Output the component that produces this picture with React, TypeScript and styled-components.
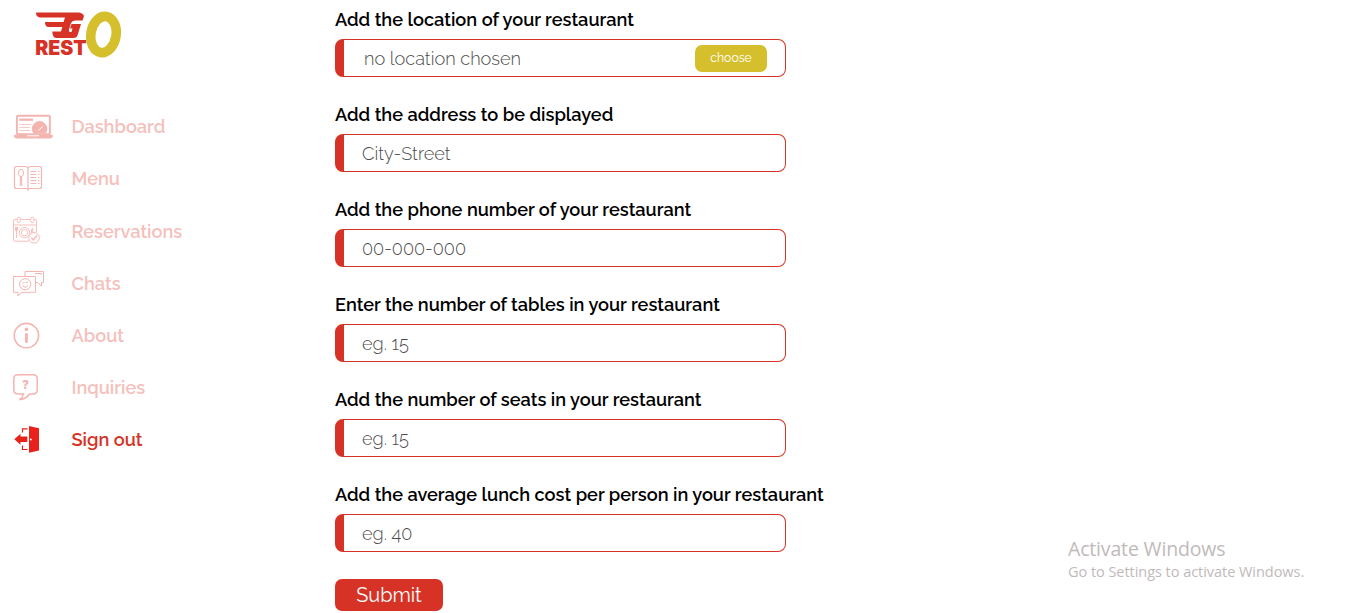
import React from "react";
import styled, { createGlobalStyle } from "styled-components";

const red = "#d63226";
const faded = "#f5bfbc";
const olive = "#d5bf2c";

const GlobalStyle = createGlobalStyle`
  *, *::before, *::after { box-sizing: border-box; }
  html, body { margin: 0; background: #fff; }
  body {
    height: 613px;
    overflow: hidden;
    font-family: Raleway, Lato, sans-serif;
  }
  button { font-family: inherit; border: 0; cursor: pointer; }
`;

const Page = styled.div`
  display: flex;
  height: 613px;
  overflow: hidden;
`;

const Sidebar = styled.aside`
  width: 335px;
  flex: none;
  display: flex;
  flex-direction: column;
`;

const Brand = styled.div`
  height: 100px;
  padding: 8px 0 0 34px;
`;

const Nav = styled.nav`
  display: flex;
  flex-direction: column;
`;

const NavItem = styled.a<{ $active?: boolean }>`
  height: 52.2px;
  padding-left: 13px;
  display: flex;
  align-items: center;
  color: ${(p) => (p.$active ? red : faded)};
  font-size: 18.2px;
  font-weight: 600;
  text-decoration: none;
`;

const NavText = styled.span`
  padding-top: 1.3px;
`;

const IconSlot = styled.span`
  width: 58.5px;
  height: 28px;
  flex: none;
  svg { display: block; }
`;

const Form = styled.form`
  width: 560px;
  display: flex;
  flex-direction: column;
  align-items: flex-start;
`;

const Field = styled.div`
  height: 95px;
  display: flex;
  flex-direction: column;
`;

const Label = styled.label`
  height: 39px;
  line-height: 39px;
  font-size: 18.22px;
  font-weight: 600;
  white-space: nowrap;
  color: #000;
`;

const Box = styled.div<{ $wide?: boolean }>`
  width: 451px;
  height: 38px;
  padding: 0 18px 0 ${(p) => (p.$wide ? 20 : 18)}px;
  display: flex;
  align-items: center;
  justify-content: space-between;
  border: 1px solid ${red};
  border-left-width: 9px;
  border-radius: 8px;
`;

const Placeholder = styled.span`
  padding-top: 2px;
  font-size: 18.15px;
  font-weight: 300;
  line-height: 34px;
  color: #4c4c4c;
`;

const ChooseButton = styled.button`
  width: 72px;
  height: 27px;
  padding: 0;
  border-radius: 7px;
  background: ${olive};
  color: #fff;
  font-size: 12.2px;
`;

const SubmitButton = styled.button`
  width: 108px;
  height: 32px;
  margin-top: 9px;
  padding: 0;
  border-radius: 7px;
  background: ${red};
  color: #fff;
  font-size: 19.9px;
`;

const Watermark = styled.div`
  position: absolute;
  left: 1068px;
  top: 537px;
  font-family: "Segoe UI", "Open Sans", sans-serif;
  color: #bfbaba;
`;

const WatermarkTitle = styled.div`
  font-size: 19.5px;
  line-height: 24px;
  letter-spacing: -0.17px;
`;

const WatermarkText = styled.div`
  font-size: 14.5px;
  line-height: 22px;
  letter-spacing: -0.04px;
`;

const Logo = () => (
  <svg width="90" height="52" viewBox="34 8 90 52">
    <g fill={red}>
      <path d="M36 12.500H79Q83 13 84 16L82.500 20.500H75Q72 20.500 71 23L69 29.500Q68.500 32 70.500 32H71.500L72.500 28.500H70L71.500 24H81L77.500 35.500Q76.500 38 73 38H56Q52.500 37.500 52.300 31.500H61L62.300 27H48Q45 26.500 45 22H63.500L65 17.500H40Q36 17 36 12.500Z" />
      <text x="35.200" y="54.800" fontFamily="Inter, sans-serif" fontWeight="900" fontSize="20.500" textLength="51.500" lengthAdjust="spacingAndGlyphs">REST</text>
    </g>
    <g transform="rotate(9 103.500 34.500)" fill="none" stroke={olive}>
      <ellipse cx="103.500" cy="34.500" rx="12.600" ry="18.200" strokeWidth="9.600" />
    </g>
  </svg>
);

const Icon = ({ children, color = "#f4b4b0" }: { children: React.ReactNode; color?: string }) => (
  <svg width="42" height="28" viewBox="0 0 42 28" fill="none" stroke={color} strokeWidth="1" color={color}>
    {children}
  </svg>
);

const DashboardIcon = () => (
  <Icon>
    <rect x="3.900" y="3.800" width="33" height="18.500" rx="1" strokeWidth="1.900" />
    <path d="M1 22.800H39.700V24.500Q39.500 26.500 37 26.500H4Q1.200 26.500 1 24.500Z" fill="currentColor" stroke="none" />
    <path d="M14 23.800H26" stroke="#fff" />
    <path d="M6.300 7.700H20" strokeWidth="2.300" />
    <path d="M6.300 12.500H18.500M6.300 15.500H17M6.300 18.500H17" opacity=".7" />
    <path d="M20.500 21.500A7.700 7.700 0 1 1 32.700 21.500Z" fill="currentColor" stroke="none" />
    <path d="M25.500 18.500L29.500 14.500" stroke="#fff" />
  </Icon>
);

const MenuIcon = () => (
  <Icon>
    <path d="M15 4Q14 2.500 12 2.500H3.500Q1.500 2.500 1.500 4.500V22.500Q1.500 24.500 3.500 24.500H13Q15 24.500 15 26.500Q15 24.500 17 24.500H26.500Q28.500 24.500 28.500 22.500V4.500Q28.500 2.500 26.500 2.500H18Q16 2.500 15 4V26" strokeWidth="1.200" />
    <ellipse cx="8" cy="9" rx="2.500" ry="3.700" />
    <path d="M7.500 12.700L7.200 21.500H8.800L8.500 12.700" />
    <path d="M17.500 7.500H23.300M17.500 10.500H23.300M17.500 13.500H23.300M17.500 16.500H23.300M17.500 19.500H23.300M25 7.500h1.500M25 10.500h1.500M25 13.500h1.500M25 16.500h1.500M25 19.500h1.500" />
  </Icon>
);

const ReservationsIcon = () => (
  <Icon>
    <g opacity=".85">
      <path d="M4 3.500H2Q.5 3.500 .5 5V23.500Q.5 25.200 2 25.200H16M7.500 3.500H17.500M21 3.500H22Q23.500 3.500 23.500 5V16.500M.5 9H23.500" />
      <rect x="4.300" y="1.200" width="3" height="5.500" rx="1.500" />
      <rect x="17.800" y="1.200" width="3" height="5.500" rx="1.500" />
      <circle cx="11.500" cy="16.700" r="5.200" />
      <circle cx="11.500" cy="16.700" r="3.200" />
      <path d="M2.500 11V14.500Q3.500 16 4.500 14.500V11M3.500 11V22M19.700 17V12Q18 13 18.300 17Z" />
      <circle cx="21" cy="21.800" r="5.300" fill="#fff" />
      <path d="M18.300 21.800L20.300 23.800L24 19.500" strokeWidth="1.600" />
    </g>
  </Icon>
);

const ChatsIcon = () => (
  <Icon>
    <path d="M12 7V2.500H30.500V13.500H28.500V17L24.500 13.500H22.500M22 4.500H28.500M28.500 4.500V6" />
    <path d="M.5 7.500H22.500V23.300H9L5 27V23.300H.5Z" />
    <circle cx="12.200" cy="15.200" r="5.600" />
    <path d="M9.500 14L10.500 13L11.500 14M13 14L14 13L15 14M9.500 16.500Q12.200 20 15 16.500" />
  </Icon>
);

const AboutIcon = () => (
  <Icon>
    <circle cx="13.400" cy="14.600" r="12.200" strokeWidth="1.600" />
    <circle cx="13.400" cy="8.400" r="1.800" fill="currentColor" stroke="none" />
    <path d="M13.400 13.300V20.700" strokeWidth="2.800" strokeLinecap="round" />
  </Icon>
);

const InquiriesIcon = () => (
  <Icon>
    <path d="M5 1.800H20Q24.300 1.800 24.300 6V16.800Q24.300 21 20 21H16.500Q13.500 25.500 6.500 26.700Q10 24 10.500 21H5Q.8 21 .8 16.800V6Q.8 1.800 5 1.800Z" strokeWidth="1.500" />
    <text x="12.500" y="15.500" textAnchor="middle" fontFamily="Inter, sans-serif" fontSize="12" fontWeight="800" fill="currentColor" stroke="none">?</text>
  </Icon>
);

const SignOutIcon = () => (
  <Icon color="#e8221b">
    <path d="M1.300 14.300L7.500 8.800V11.500H14.300V17H7.500V19.800Z" fill="currentColor" stroke="none" />
    <path d="M14.500 3.800H9.500V7.500M9.500 20.500V24.500H14.500" strokeWidth="1.200" />
    <path d="M16 1L26 3.200V25.400L16 27.700Z" fill="currentColor" stroke="none" />
    <circle cx="17.800" cy="14.500" r=".9" fill="#fff" stroke="none" />
  </Icon>
);

const navItems = [
  { text: "Dashboard", icon: <DashboardIcon /> },
  { text: "Menu", icon: <MenuIcon /> },
  { text: "Reservations", icon: <ReservationsIcon /> },
  { text: "Chats", icon: <ChatsIcon /> },
  { text: "About", icon: <AboutIcon /> },
  { text: "Inquiries", icon: <InquiriesIcon /> },
  { text: "Sign out", icon: <SignOutIcon />, active: true },
];

const fields = [
  { label: "Add the location of your restaurant", hint: "no location chosen", choose: true },
  { label: "Add the address to be displayed", hint: "City-Street" },
  { label: "Add the phone number of your restaurant", hint: "00-000-000" },
  { label: "Enter the number of tables in your restaurant", hint: "eg. 15" },
  { label: "Add the number of seats in your restaurant", hint: "eg. 15" },
  { label: "Add the average lunch cost per person in your restaurant", hint: "eg. 40" },
];

export default function App() {
  return (
    <>
      <GlobalStyle />
      <Page>
        <Sidebar>
          <Brand><Logo /></Brand>
          <Nav>
            {navItems.map((item) => (
              <NavItem key={item.text} $active={item.active}>
                <IconSlot>{item.icon}</IconSlot>
                <NavText>{item.text}</NavText>
              </NavItem>
            ))}
          </Nav>
        </Sidebar>
        <Form>
          {fields.map((f) => (
            <Field key={f.label}>
              <Label>{f.label}</Label>
              <Box $wide={f.choose}>
                <Placeholder>{f.hint}</Placeholder>
                {f.choose && <ChooseButton type="button">choose</ChooseButton>}
              </Box>
            </Field>
          ))}
          <SubmitButton type="button">Submit</SubmitButton>
        </Form>
      </Page>
      <Watermark>
        <WatermarkTitle>Activate Windows</WatermarkTitle>
        <WatermarkText>Go to Settings to activate Windows.</WatermarkText>
      </Watermark>
    </>
  );
}
